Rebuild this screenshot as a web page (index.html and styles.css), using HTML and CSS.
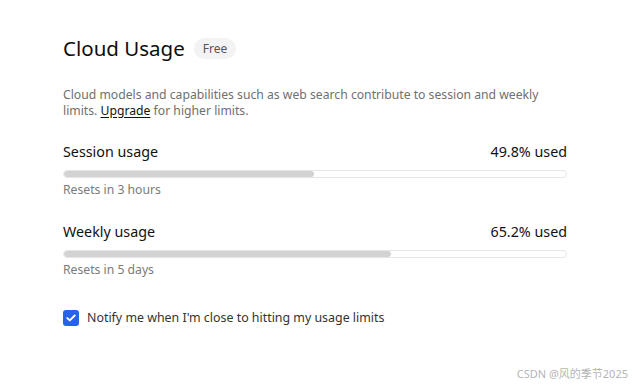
FILE: index.html
```html
<!DOCTYPE html>
<html>
<head>
<meta charset="utf-8">
<link rel="stylesheet" href="styles.css">
</head>
<body>
<main class="panel">
  <header class="head">
    <h1 class="title">Cloud Usage</h1>
    <span class="badge">Free</span>
  </header>
  <p class="desc">Cloud models and capabilities such as web search contribute to session and weekly limits. <a class="link" href="#">Upgrade</a> for higher limits.</p>

  <section class="usage">
    <div class="row"><span>Session usage</span><span>49.8% used</span></div>
    <div class="bar"><div class="fill" style="width:49.8%"></div></div>
    <div class="reset">Resets in 3 hours</div>
  </section>

  <section class="usage">
    <div class="row"><span>Weekly usage</span><span>65.2% used</span></div>
    <div class="bar"><div class="fill" style="width:65.2%"></div></div>
    <div class="reset">Resets in 5 days</div>
  </section>

  <label class="notify">
    <span class="check">
      <svg width="10" height="8" viewBox="0 0 10 8"><path d="M1.3 4.1 L3.8 6.4 L8.7 1.5" fill="none" stroke="#fff" stroke-width="1.9" stroke-linecap="round" stroke-linejoin="round"/></svg>
    </span>
    <span>Notify me when I'm close to hitting my usage limits</span>
  </label>
</main>
<div class="watermark">CSDN @风的季节2025</div>
</body>
</html>
```

FILE: styles.css
```css
html, body {
  margin: 0;
  padding: 0;
  background: #fff;
  font-family: "Noto Sans", "Noto Sans CJK SC", sans-serif;
}
body {
  width: 637px;
  height: 387px;
  position: relative;
  overflow: hidden;
}
.panel {
  width: 504px;
  padding: 34px 0 0 63px;
}
.head {
  display: flex;
  align-items: center;
  gap: 9px;
}
.title {
  margin: 0;
  font-size: 20.5px;
  font-weight: 400;
  color: #0d0d0d;
  line-height: 28px;
}
.badge {
  background: #f3f3f3;
  color: #555;
  font-size: 12px;
  line-height: 21px;
  padding: 0 9px;
  border-radius: 11px;
}
.desc {
  margin: 25px 0 0;
  font-size: 12.2px;
  line-height: 15.5px;
  color: #6f6f6f;
}
.link {
  color: #111;
  text-decoration: underline;
  text-underline-offset: 2px;
}
.usage {
  margin-top: 24px;
}
.usage + .usage {
  margin-top: 24px;
}
.row {
  display: flex;
  justify-content: space-between;
  font-size: 14.3px;
  line-height: 20px;
  color: #111;
}
.bar {
  margin-top: 8px;
  height: 8px;
  border: 1px solid #e6e6e6;
  border-radius: 5px;
  box-sizing: border-box;
  overflow: hidden;
  background: #fff;
}
.fill {
  height: 100%;
  background: #d3d3d3;
  border-radius: 5px;
}
.reset {
  margin-top: 3px;
  font-size: 12.2px;
  line-height: 17px;
  color: #7a7a7a;
}
.notify {
  margin-top: 31px;
  display: flex;
  align-items: center;
  gap: 8px;
  font-size: 12.4px;
  color: #333;
}
.check {
  width: 16px;
  height: 16px;
  border-radius: 3px;
  background: #2563eb;
  display: flex;
  align-items: center;
  justify-content: center;
}
.watermark {
  position: absolute;
  right: 9px;
  bottom: 6px;
  font-size: 11px;
  color: #b5b5b5;
}
```
